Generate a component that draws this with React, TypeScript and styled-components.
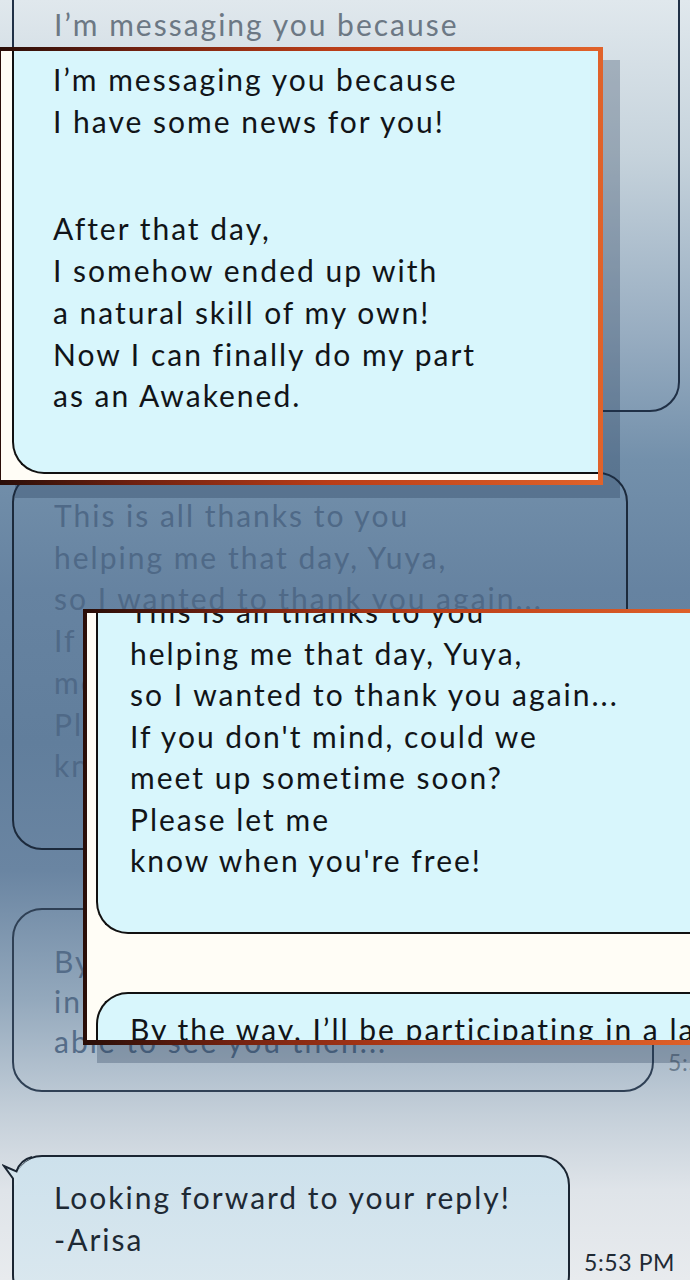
import React from 'react';
import styled, { createGlobalStyle } from 'styled-components';

const GlobalStyle = createGlobalStyle`
  html, body {
    margin: 0;
    padding: 0;
    background: #e6eaee;
  }
  * {
    box-sizing: border-box;
  }
`;

const Stage = styled.div`
  position: relative;
  width: 690px;
  height: 1280px;
  overflow: hidden;
  font-family: Lato, "Open Sans", sans-serif;
  font-size: 30px;
  letter-spacing: 2px;
  background: linear-gradient(
    180deg,
    #e0e8ed 0%,
    #c6d3dc 12%,
    #98adc1 26%,
    #7390ab 36%,
    #6683a1 46%,
    #617e9c 58%,
    #6a85a2 68%,
    #93a8bc 78%,
    #c4cfd9 87%,
    #dfe4e9 93%,
    #e8ebee 100%
  );
`;

const Thread = styled.div`
  display: flex;
  flex-direction: column;
  padding-left: 12px;
`;

const Row = styled.div<{ $gap: number }>`
  display: flex;
  align-items: flex-end;
  gap: 14px;
  margin-top: ${p => p.$gap}px;
`;

const Bubble = styled.div<{ $w: number; $h: number; $pad: number; $line?: string; $fill?: string }>`
  position: relative;
  flex: none;
  width: ${p => p.$w}px;
  height: ${p => p.$h}px;
  padding: ${p => p.$pad}px 0 0 40px;
  border: 2px solid ${p => p.$line || '#1d2b3d'};
  border-radius: 30px;
  background: ${p => p.$fill || 'transparent'};
`;

const Clip = styled.div`
  height: 100%;
  overflow: hidden;
`;

const Line = styled.div<{ $tone: string; $lh?: number }>`
  white-space: nowrap;
  line-height: ${p => p.$lh || 41.7}px;
  color: ${p => p.$tone};
`;

const Gap = styled.div<{ $h: number }>`
  flex: none;
  height: ${p => p.$h}px;
`;

const Time = styled.span<{ $drop: number; $tone: string }>`
  flex: none;
  margin-bottom: ${p => p.$drop}px;
  font-size: 23px;
  letter-spacing: 0.6px;
  line-height: 26px;
  white-space: nowrap;
  color: ${p => p.$tone};
`;

const Tail = styled.svg`
  position: absolute;
  left: -12px;
  top: -2px;
  width: 40px;
  height: 30px;
`;

const Panel = styled.div<{ $left: number; $top: number; $w: number; $h: number; $sx: number; $sy: number }>`
  position: absolute;
  left: ${p => p.$left}px;
  top: ${p => p.$top}px;
  width: ${p => p.$w}px;
  height: ${p => p.$h}px;
  overflow: hidden;
  display: flex;
  flex-direction: column;
  background: #fffdf6;
  border-style: solid;
  border-image: linear-gradient(90deg, #2a0e08 0%, #6e2010 22%, #b93d18 55%, #e0622a 100%) 1;
  box-shadow: ${p => p.$sx}px ${p => p.$sy}px 0 rgba(30, 50, 80, 0.28);
`;

const PanelOne = styled(Panel)`
  border-width: 4px 5px 5px 3px;
  padding: 0 0 6px 11px;
`;

const PanelTwo = styled(Panel)`
  border-width: 4px 0 5px 4px;
  padding-left: 9px;
`;

const Card = styled.div<{ $pad: number; $open: 'top' | 'bottom'; $h?: number }>`
  flex: ${p => (p.$h ? 'none' : '1')};
  height: ${p => (p.$h ? `${p.$h}px` : 'auto')};
  overflow: hidden;
  background: #d8f6fc;
  border-left: 2px solid #111;
  ${p =>
    p.$open === 'top'
      ? `border-bottom: 2px solid #111; border-bottom-left-radius: 32px;`
      : `border-top: 2px solid #111; border-top-left-radius: 32px;`}
  padding-left: ${p => p.$pad}px;
`;

const CardText = styled.div<{ $shift: number }>`
  margin-top: ${p => p.$shift}px;
`;

const ink = '#111418';

const firstNote = ["I\u2019m messaging you because", 'I have some news for you!'];
const secondNote = [
  'After that day,',
  'I somehow ended up with',
  'a natural skill of my own!',
  'Now I can finally do my part',
  'as an Awakened.',
];
const thanks = [
  'This is all thanks to you',
  'helping me that day, Yuya,',
  'so I wanted to thank you again...',
  "If you don't mind, could we",
  'meet up sometime soon?',
  'Please let me',
  "know when you're free!",
];
const byTheWay = [
  "By the way, I\u2019ll be participating in a large event,",
  "in front of a lot of people. I'd love to be",
  'able to see you then...',
];

export default function App() {
  return (
    <>
      <GlobalStyle />
      <Stage>
        <Thread>
          <Row $gap={-40}>
            <Bubble $w={668} $h={452} $pad={42} $line="#203046">
              <Clip>
                {[...firstNote, '', '', ...secondNote].map((t, i) => (
                  <Line key={i} $tone="#6c7884">{t || '\u00a0'}</Line>
                ))}
              </Clip>
            </Bubble>
          </Row>
          <Row $gap={60}>
            <Bubble $w={616} $h={378} $pad={21} $line="#1c2a3c">
              <Clip>
                {thanks.map(t => (
                  <Line key={t} $tone="#4f6987">{t}</Line>
                ))}
              </Clip>
            </Bubble>
          </Row>
          <Row $gap={58}>
            <Bubble $w={642} $h={184} $pad={31} $line="#2f4055">
              <Clip>
                {byTheWay.map(t => (
                  <Line key={t} $tone="#546c88" $lh={40}>{t}</Line>
                ))}
              </Clip>
            </Bubble>
            <Time $drop={17} $tone="#6b7c8e">5:53 PM</Time>
          </Row>
          <Row $gap={63}>
            <Bubble
              $w={558}
              $h={150}
              $pad={20}
              $line="#1a2532"
              $fill="linear-gradient(180deg, #cde1ec 0%, #dbe8ef 100%)"
            >
              <Tail viewBox="0 0 40 30">
                <path d="M28 2 C20 5 16 10 14 17 L2 11 L11 24 L11 30 L15 30 L15 22 C16 13 21 7 28 4 Z" fill="#d3e4ed" />
                <path d="M30 2 C22 4 17 9 14.5 16.5 L2 11 L11 23.5 L11 30" fill="none" stroke="#1a2532" strokeWidth="2" strokeLinejoin="miter" />
              </Tail>
              <Clip>
                <Line $tone="#1e2934">Looking forward to your reply!</Line>
                <Line $tone="#1e2934">-Arisa</Line>
              </Clip>
            </Bubble>
            <Time $drop={30} $tone="#1f2a35">5:53 PM</Time>
          </Row>
        </Thread>

        <PanelOne $left={-2} $top={47} $w={605} $h={438} $sx={17} $sy={13}>
          <Card $open="top" $pad={39}>
            <CardText $shift={8}>
              {firstNote.map(t => (
                <Line key={t} $tone={ink}>{t}</Line>
              ))}
              <Gap $h={66} />
              {secondNote.map(t => (
                <Line key={t} $tone={ink}>{t}</Line>
              ))}
            </CardText>
          </Card>
        </PanelOne>

        <PanelTwo $left={83} $top={609} $w={620} $h={436} $sx={14} $sy={18}>
          <Card $open="top" $pad={32} $h={321}>
            <CardText $shift={-22}>
              {thanks.map(t => (
                <Line key={t} $tone={ink} $lh={41.5}>{t}</Line>
              ))}
            </CardText>
          </Card>
          <Gap $h={58} />
          <Card $open="bottom" $pad={32} $h={120}>
            <CardText $shift={15}>
              {byTheWay.map(t => (
                <Line key={t} $tone={ink} $lh={41.5}>{t}</Line>
              ))}
            </CardText>
          </Card>
        </PanelTwo>
      </Stage>
    </>
  );
}
